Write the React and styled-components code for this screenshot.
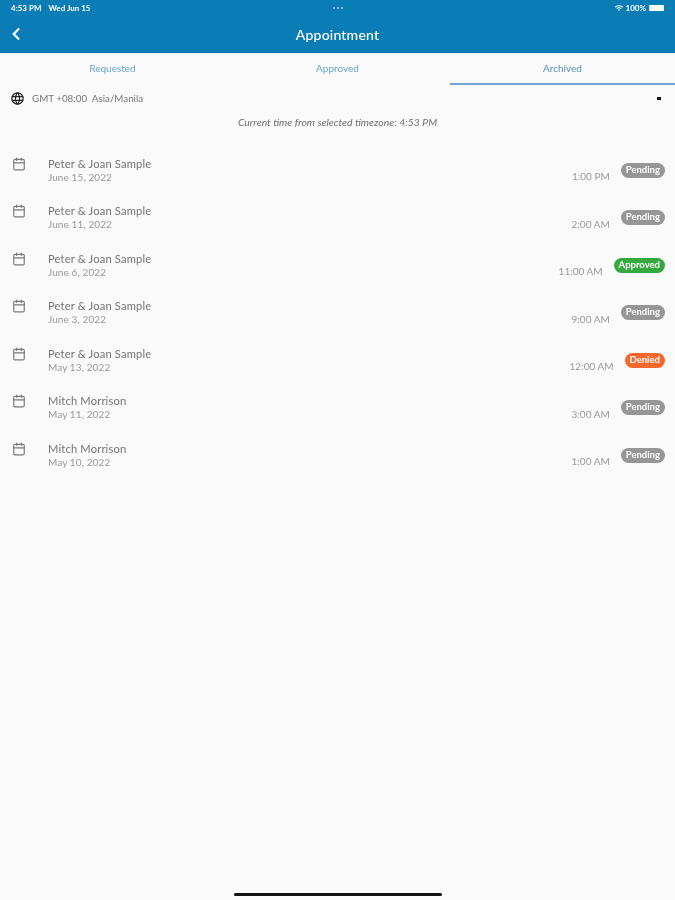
import React from "react";
import styled, { createGlobalStyle } from "styled-components";
import { FiCalendar } from "react-icons/fi";
import { FaChevronLeft, FaWifi } from "react-icons/fa";
import { TbWorld } from "react-icons/tb";

const GlobalStyle = createGlobalStyle`
  html, body {
    margin: 0;
    padding: 0;
    background: #fafafa;
    font-family: "Lato", "Open Sans", sans-serif;
  }
`;

const Page = styled.div`
  position: relative;
  width: 675px;
  height: 900px;
  overflow: hidden;
  background: #fafafa;
  filter: blur(0.4px);
`;

const Header = styled.header`
  height: 53px;
  box-sizing: border-box;
  background: #0a7db7;
  color: #fff;
  border-bottom: 1px solid #0670a8;
`;

const StatusBar = styled.div`
  height: 16px;
  display: grid;
  grid-template-columns: 1fr auto 1fr;
  align-items: center;
  padding: 0 11px;
  font-size: 8px;
  font-weight: 700;
`;

const StatusLeft = styled.div`
  display: flex;
  gap: 7px;
`;

const StatusDots = styled.div`
  display: flex;
  gap: 2px;
`;

const Dot = styled.span`
  width: 2px;
  height: 2px;
  border-radius: 50%;
  background: #a5d4ea;
`;

const StatusRight = styled.div`
  display: flex;
  justify-content: flex-end;
  align-items: center;
  gap: 3px;
`;

const Battery = styled.span`
  width: 15px;
  height: 6px;
  border-radius: 1px;
  background: #fff;
`;

const TitleRow = styled.div`
  position: relative;
  height: 36px;
  display: flex;
  align-items: center;
  justify-content: center;
  font-size: 14px;
  font-weight: 500;
  letter-spacing: 0.2px;
`;

const BackButton = styled.span`
  position: absolute;
  left: 9px;
  top: 11px;
  display: flex;
`;

const Tabs = styled.nav`
  display: grid;
  grid-template-columns: repeat(3, 1fr);
  height: 32px;
`;

const Tab = styled.div`
  display: flex;
  align-items: center;
  justify-content: center;
  padding-bottom: 1px;
  box-sizing: border-box;
  font-size: 10px;
  color: ${(p) => (p.$active ? "#5b8fc4" : "#6aa6cf")};
  border-bottom: 2px solid ${(p) => (p.$active ? "#74a3d6" : "transparent")};
`;

const ZoneRow = styled.div`
  display: flex;
  align-items: center;
  height: 26px;
  padding: 0 14px 0 10px;
  font-size: 9.8px;
  color: #777;
`;

const ZoneLabel = styled.span`
  margin-left: 7px;
  flex: 1;
  white-space: pre;
`;

const Caret = styled.span`
  width: 4px;
  height: 3px;
  background: #111;
`;

const CurrentTime = styled.div`
  text-align: center;
  margin-top: 5px;
  font-size: 10.4px;
  font-style: italic;
  color: #6f6f6f;
`;

const List = styled.ul`
  list-style: none;
  margin: 25.5px 0 0;
  padding: 0 10px 0 12px;
`;

const Row = styled.li`
  display: flex;
  height: 47.5px;
  box-sizing: border-box;
  padding-top: 3px;
`;

const CalendarIcon = styled(FiCalendar)`
  flex: none;
  margin-top: 0;
  color: #7a7a7a;
`;

const Info = styled.div`
  flex: 1;
  margin-left: 22px;
`;

const Name = styled.div`
  font-size: 11.2px;
  line-height: 14px;
  color: #747474;
  letter-spacing: 0.15px;
`;

const DateText = styled.div`
  font-size: 10px;
  line-height: 13px;
  color: #999;
  letter-spacing: 0.1px;
`;

const Time = styled.div`
  align-self: flex-start;
  margin-top: 13.5px;
  margin-right: 11px;
  font-size: 10px;
  line-height: 13px;
  color: #999;
`;

const badgeColors = {
  Pending: "#969696",
  Approved: "#35a93f",
  Denied: "#f4682c",
};

const Badge = styled.span`
  align-self: flex-start;
  height: 15px;
  line-height: 14px;
  margin-top: 6px;
  padding: 0 5px;
  border-radius: 8px;
  font-size: 9.5px;
  font-weight: 700;
  color: #fff;
  background: ${(p) => badgeColors[p.$status]};
`;

const HomeBar = styled.div`
  position: absolute;
  left: 234px;
  bottom: 4px;
  width: 208px;
  height: 3px;
  border-radius: 2px;
  background: #111;
`;

const appointments = [
  ["Peter & Joan Sample", "June 15, 2022", "1:00 PM", "Pending"],
  ["Peter & Joan Sample", "June 11, 2022", "2:00 AM", "Pending"],
  ["Peter & Joan Sample", "June 6, 2022", "11:00 AM", "Approved"],
  ["Peter & Joan Sample", "June 3, 2022", "9:00 AM", "Pending"],
  ["Peter & Joan Sample", "May 13, 2022", "12:00 AM", "Denied"],
  ["Mitch Morrison", "May 11, 2022", "3:00 AM", "Pending"],
  ["Mitch Morrison", "May 10, 2022", "1:00 AM", "Pending"],
];

function App() {
  return (
    <Page>
      <GlobalStyle />
      <Header>
        <StatusBar>
          <StatusLeft>
            <span>4:53 PM</span>
            <span>Wed Jun 15</span>
          </StatusLeft>
          <StatusDots>
            <Dot />
            <Dot />
            <Dot />
          </StatusDots>
          <StatusRight>
            <FaWifi size={8} />
            <span>100%</span>
            <Battery />
          </StatusRight>
        </StatusBar>
        <TitleRow>
          <BackButton>
            <FaChevronLeft size={14} />
          </BackButton>
          Appointment
        </TitleRow>
      </Header>
      <Tabs>
        <Tab>Requested</Tab>
        <Tab>Approved</Tab>
        <Tab $active>Archived</Tab>
      </Tabs>
      <ZoneRow>
        <TbWorld size={15} color="#222" />
        <ZoneLabel>GMT +08:00  Asia/Manila</ZoneLabel>
        <Caret />
      </ZoneRow>
      <CurrentTime>Current time from selected timezone: 4:53 PM</CurrentTime>
      <List>
        {appointments.map(([name, date, time, status], i) => (
          <Row key={i}>
            <CalendarIcon size={14} />
            <Info>
              <Name>{name}</Name>
              <DateText>{date}</DateText>
            </Info>
            <Time>{time}</Time>
            <Badge $status={status}>{status}</Badge>
          </Row>
        ))}
      </List>
      <HomeBar />
    </Page>
  );
}

export default App;
